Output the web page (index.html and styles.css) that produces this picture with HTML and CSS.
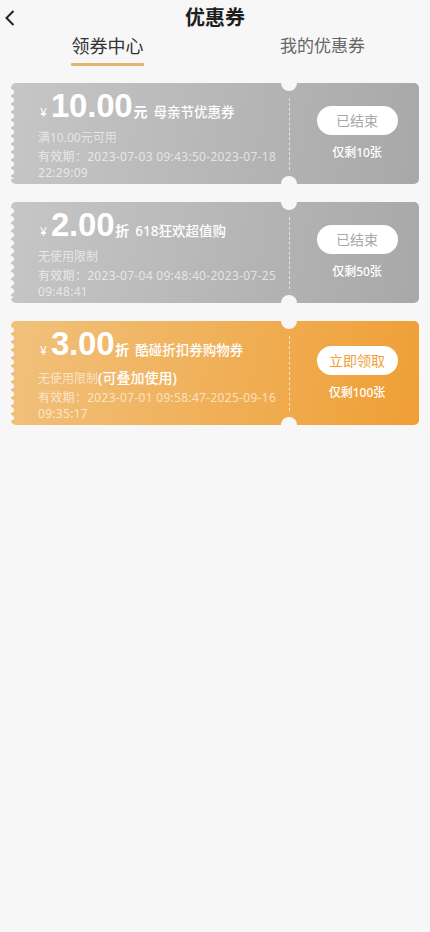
FILE: index.html
```html
<!DOCTYPE html>
<html lang="zh-CN">
<head>
<meta charset="utf-8">
<meta name="viewport" content="width=device-width, initial-scale=1">
<title>优惠券</title>
<link rel="stylesheet" href="styles.css">
</head>
<body>
<div class="page">
  <header class="header">
    <span class="back">
      <svg width="12" height="18" viewBox="0 0 12 18"><polyline points="9.5,2 2.5,9 9.5,16" fill="none" stroke="#222" stroke-width="2"/></svg>
    </span>
    <h1 class="title">优惠券</h1>
  </header>
  <nav class="tabs">
    <div class="tab active"><span class="tab-text">领券中心</span><span class="tab-line"></span></div>
    <div class="tab"><span class="tab-text">我的优惠券</span></div>
  </nav>
  <main class="list">
    <div class="coupon gray">
      <div class="left">
        <div class="price-row"><span class="yen">¥</span><span class="num">10.00</span><span class="unit">元</span><span class="name">母亲节优惠券</span></div>
        <div class="cond">满10.00元可用</div>
        <div class="date">有效期：2023-07-03 09:43:50-2023-07-18 22:29:09</div>
      </div>
      <div class="right">
        <i class="notch top"></i><i class="notch bottom"></i>
        <span class="btn ended">已结束</span>
        <span class="left-count">仅剩10张</span>
      </div>
    </div>
    <div class="coupon gray">
      <div class="left">
        <div class="price-row"><span class="yen">¥</span><span class="num">2.00</span><span class="unit">折</span><span class="name">618狂欢超值购</span></div>
        <div class="cond">无使用限制</div>
        <div class="date">有效期：2023-07-04 09:48:40-2023-07-25 09:48:41</div>
      </div>
      <div class="right">
        <i class="notch top"></i><i class="notch bottom"></i>
        <span class="btn ended">已结束</span>
        <span class="left-count">仅剩50张</span>
      </div>
    </div>
    <div class="coupon orange">
      <div class="left">
        <div class="price-row"><span class="yen">¥</span><span class="num">3.00</span><span class="unit">折</span><span class="name">酷碰折扣券购物券</span></div>
        <div class="cond">无使用限制<span class="stack">(可叠加使用)</span></div>
        <div class="date">有效期：2023-07-01 09:58:47-2025-09-16 09:35:17</div>
      </div>
      <div class="right">
        <i class="notch top"></i><i class="notch bottom"></i>
        <span class="btn get">立即领取</span>
        <span class="left-count">仅剩100张</span>
      </div>
    </div>
  </main>
</div>
</body>
</html>
```
FILE: styles.css
```css
* { box-sizing: border-box; }
html, body { margin: 0; padding: 0; }
body {
  background: #f7f7f7;
  font-family: "Noto Sans", "Noto Sans CJK SC", sans-serif;
  color: #333;
}
.page { width: 430px; min-height: 932px; }

.header {
  position: relative;
  height: 36px;
  display: flex;
  align-items: center;
  justify-content: center;
}
.back {
  position: absolute;
  left: 4px;
  top: 9px;
  display: flex;
}
.title {
  margin: 0;
  font-size: 20px;
  font-weight: 700;
  line-height: 36px;
  color: #1e1e1e;
}

.tabs {
  display: flex;
  height: 30px;
}
.tab {
  flex: 1;
  display: flex;
  flex-direction: column;
  align-items: center;
}
.tab-text {
  font-size: 17px;
  line-height: 20px;
  color: #666;
}
.tab.active .tab-text { font-size: 18px; color: #333; }
.tab-line {
  margin-top: 7px;
  width: 73px;
  height: 3px;
  background: #deb672;
  border-radius: 1px;
}

.list {
  padding: 17px 11px 0;
  display: flex;
  flex-direction: column;
  gap: 18px;
}

.coupon {
  position: relative;
  display: flex;
  border-radius: 5px;
  color: #fff;
}
.coupon::before {
  content: "";
  position: absolute;
  left: 0;
  top: 5px;
  bottom: 5px;
  width: 4px;
  background: radial-gradient(circle at 0 4px, #f7f7f7 2.6px, transparent 3.2px) 0 0 / 4px 8px repeat-y;
}
.gray { background: linear-gradient(100deg, #c6c6c6 0%, #a8a8a8 100%); }
.orange { background: linear-gradient(100deg, #f1c17c 0%, #ef9f35 100%); }

.left {
  width: 278px;
  padding: 6px 2px 3px 27px;
}
.price-row {
  display: flex;
  align-items: baseline;
  height: 33px;
  line-height: 33px;
  padding-left: 2px;
}
.yen { font-size: 12px; margin-right: 4px; }
.num {
  font-family: "Liberation Sans", "Noto Sans", sans-serif;
  font-size: 33px;
  font-weight: 700;
  letter-spacing: -0.2px;
}
.unit { font-size: 14px; font-weight: 700; margin-left: 1px; font-family: "Noto Sans CJK SC", sans-serif; }
.name { font-size: 13.5px; font-weight: 500; margin-left: 6px; }

.cond {
  margin-top: 8px;
  font-size: 12px;
  line-height: 16px;
  color: rgba(255,255,255,0.6);
}
.stack {
  font-size: 14px;
  line-height: 19px;
  font-weight: 500;
  color: #fff;
}
.date {
  margin-top: 3px;
  font-size: 12px;
  line-height: 16px;
  letter-spacing: 0.3px;
  color: rgba(255,255,255,0.65);
}

.right {
  position: relative;
  flex: 1;
  display: flex;
  flex-direction: column;
  align-items: center;
  justify-content: center;
  padding-left: 6px;
}
.right::after {
  content: "";
  position: absolute;
  left: 0;
  top: 15px;
  bottom: 14px;
  border-left: 1px dashed rgba(255,255,255,0.65);
}
.notch {
  position: absolute;
  left: -8px;
  width: 16px;
  height: 16px;
  border-radius: 50%;
  background: #f7f7f7;
}
.notch.top { top: -8px; }
.notch.bottom { bottom: -8px; }

.btn {
  width: 81px;
  height: 29px;
  border-radius: 15px;
  background: #fff;
  font-size: 14px;
  line-height: 29px;
  text-align: center;
}
.btn.ended { color: #a9a9a9; }
.btn.get { color: #ef9f35; }
.left-count {
  margin-top: 10px;
  font-size: 12px;
  line-height: 16px;
  font-weight: 500;
}
```
